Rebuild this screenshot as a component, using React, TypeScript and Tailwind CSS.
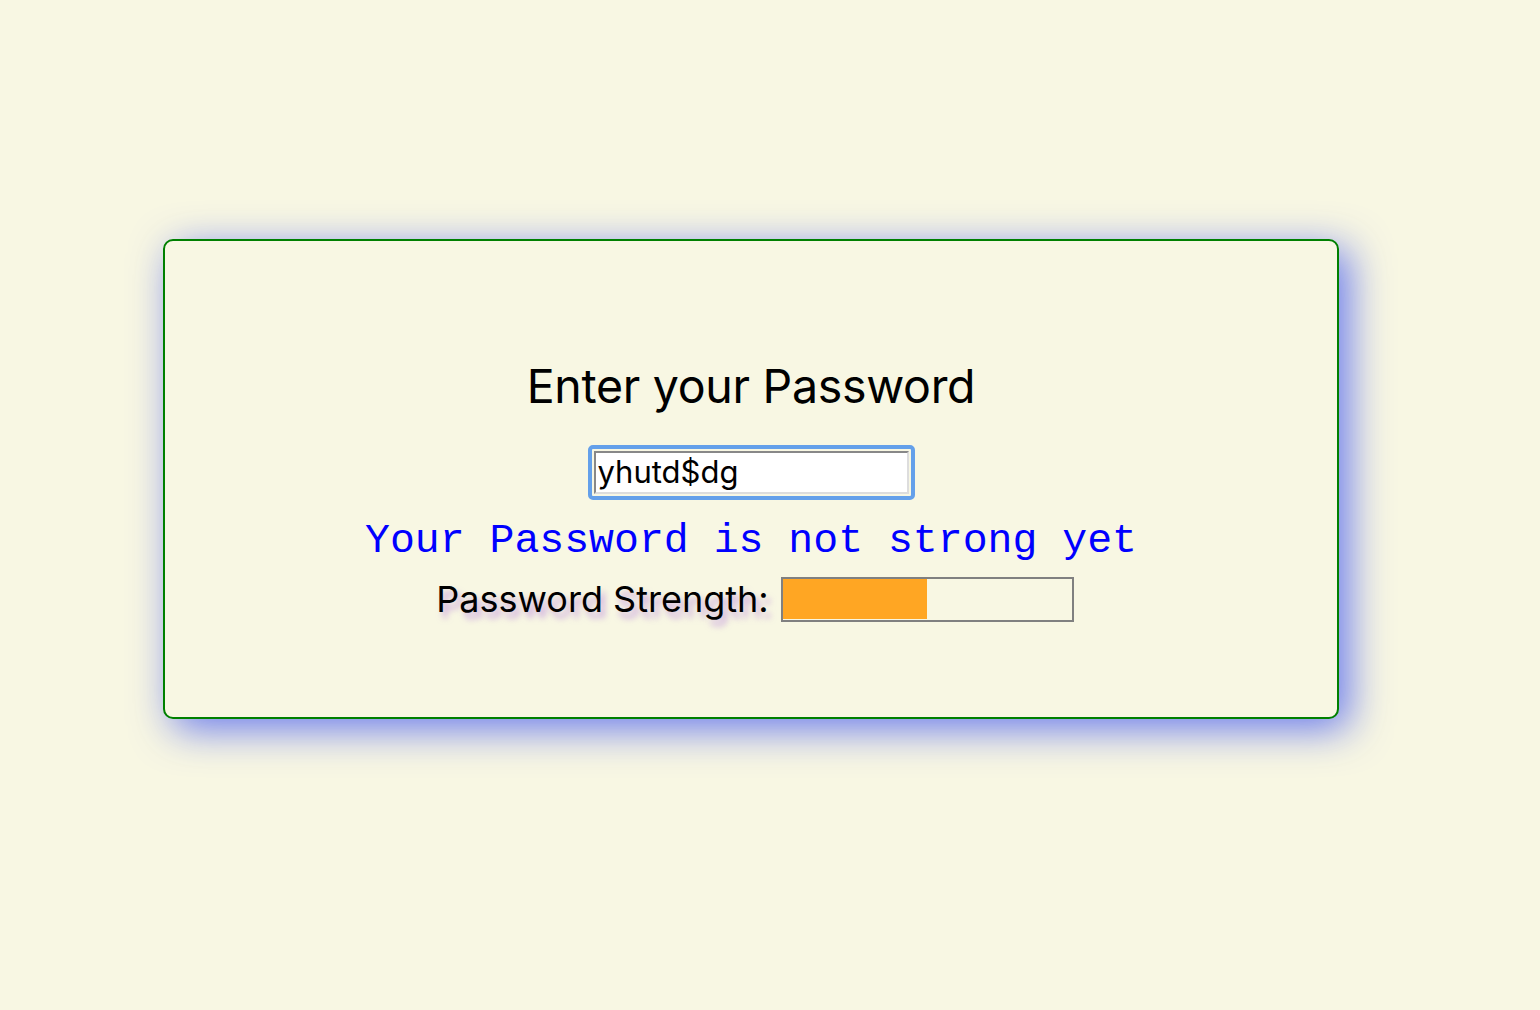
import React from 'react';

const App = () => {
  return (
    <div className="min-h-[1010px] w-full bg-[#f8f7e3] pt-[239px]" style={{ fontFamily: 'Inter, "Noto Sans", sans-serif' }}>
      <div className="ml-[163px] w-[1176px] h-[480px] rounded-[10px] border-2 border-[#008000] bg-[#f8f7e3] shadow-[10px_10px_40px_rgba(80,100,240,0.85)] flex flex-col items-center pt-[116px]">
        <h1 className="text-[46.5px] leading-[58px] tracking-[-0.3px] text-black">Enter your Password</h1>

        <div className="mt-[30px] rounded-[5px] border-[4px] border-[#64a0ea] p-[2px]">
          <input
            type="text"
            defaultValue="yhutd$dg"
            spellCheck={false}
            className="w-[315px] h-[43px] bg-white border-2 border-t-[#888] border-l-[#888] border-b-[#ddd] border-r-[#ddd] px-[2px] text-[31px] text-black outline-none"
            style={{ fontFamily: 'Inter, sans-serif' }}
          />
        </div>

        <p className="mt-[16px] text-[41.5px] leading-[50px] text-[#0000ff]" style={{ fontFamily: '"Courier New", "Liberation Mono", monospace' }}>
          Your Password is not strong yet
        </p>

        <div className="mt-[10px] ml-[8px] flex items-center gap-[12px]">
          <span className="text-[36px] leading-[46px] text-black [text-shadow:4px_6px_6px_rgba(170,110,220,0.6)]">Password Strength:</span>
          <div className="w-[293px] h-[45px] border-2 border-[#808080] bg-[#f8f7e3] flex">
            <div className="w-[50%] h-[40px] bg-[#ffa623]" />
          </div>
        </div>
      </div>
    </div>
  );
};

export default App;
